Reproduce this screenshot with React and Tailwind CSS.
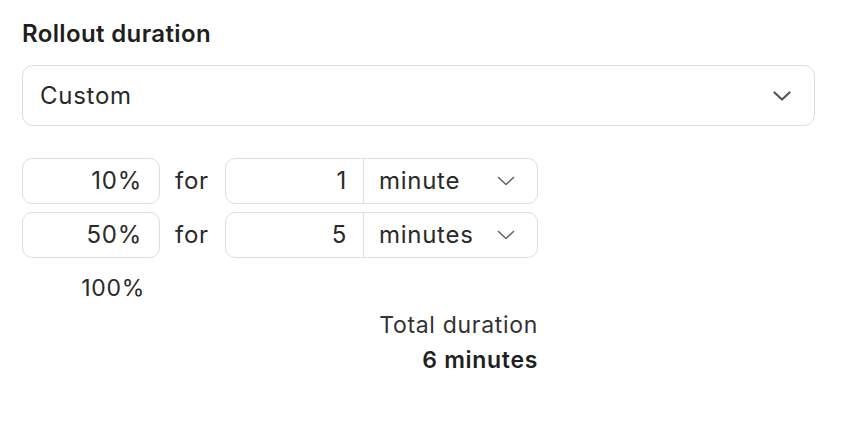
function Chevron({ className, stroke }) {
  return (
    <svg width="18" height="10" viewBox="0 0 18 10" fill="none" className={className}>
      <path d="M1.5 1.5 L9 8.5 L16.5 1.5" stroke="currentColor" strokeWidth={stroke} strokeLinecap="round" strokeLinejoin="round" />
    </svg>
  );
}

function PercentBox({ value }) {
  return (
    <div className="flex h-[46px] w-[138px] items-center justify-end rounded-[10px] border border-[#dedee3] pr-[17px] text-[24px] tracking-[0.03em] text-[#2a2a2a]">
      {value}
    </div>
  );
}

function DurationBox({ amount, unit }) {
  return (
    <div className="flex h-[46px] w-[313px] rounded-[10px] border border-[#dedee3] text-[24px] tracking-[0.03em] text-[#2a2a2a]">
      <div className="flex w-[138px] items-center justify-end border-r border-[#dedee3] pr-[16px]">{amount}</div>
      <div className="flex flex-1 items-center justify-between pl-[15px] pr-[22px]">
        <span>{unit}</span>
        <Chevron stroke={1.6} className="text-[#666]" />
      </div>
    </div>
  );
}

export default function App() {
  return (
    <main className="min-h-screen bg-white pl-[22px] pr-[31px] pt-[19px] font-['Inter',sans-serif] text-[#1f1f1f]">
      <h2 className="text-[24px] font-semibold leading-[30px] tracking-[0.015em]">Rollout duration</h2>
      <div className="mt-[16px] flex h-[61px] items-center justify-between rounded-[11px] border border-[#dcdce3] pl-[17px] pr-[23px] text-[24px] tracking-[0.03em] text-[#2a2a2a]">
        <span>Custom</span>
        <Chevron stroke={2.2} className="text-[#555]" />
      </div>
      <div className="mt-[32px] flex w-[516px] flex-col gap-[8px]">
        <div className="flex items-center">
          <PercentBox value="10%" />
          <span className="w-[65px] pl-[15px] text-[24px] tracking-[0.03em] text-[#2a2a2a]">for</span>
          <DurationBox amount="1" unit="minute" />
        </div>
        <div className="flex items-center">
          <PercentBox value="50%" />
          <span className="w-[65px] pl-[15px] text-[24px] tracking-[0.03em] text-[#2a2a2a]">for</span>
          <DurationBox amount="5" unit="minutes" />
        </div>
        <div className="w-[138px] pt-[8px] pr-[15px] text-right text-[23px] leading-[28px] tracking-[0.03em] text-[#2a2a2a]">100%</div>
        <div className="mt-[-2px] flex flex-col items-end text-[23px] leading-[35px] tracking-[0.03em]">
          <span className="text-[#333]">Total duration</span>
          <span className="font-semibold text-[#1f1f1f]">6 minutes</span>
        </div>
      </div>
    </main>
  );
}
